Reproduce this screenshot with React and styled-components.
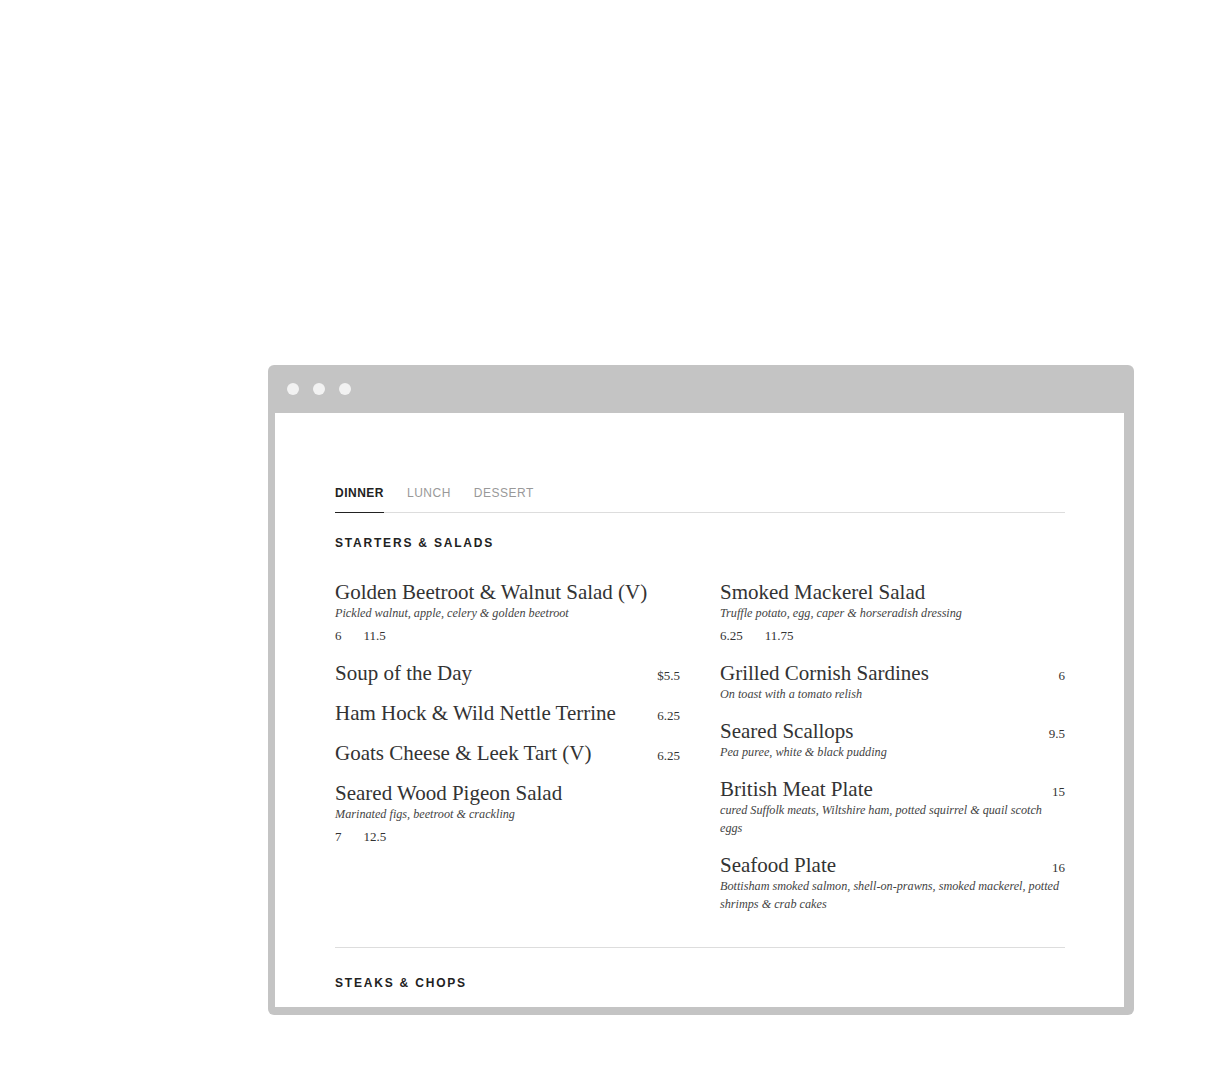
import React from 'react';
import styled, { createGlobalStyle } from 'styled-components';

const GlobalStyle = createGlobalStyle`
  html, body {
    margin: 0;
    padding: 0;
    background: #ffffff;
  }
  body {
    font-family: "Liberation Serif", "Times New Roman", serif;
    color: #333333;
  }
`;

const sans = `"Liberation Sans", Arial, sans-serif`;

const Page = styled.div`
  padding: 365px 0 0 268px;
  height: 1066px;
  box-sizing: border-box;
`;

const Frame = styled.div`
  width: 866px;
  background: #c4c4c4;
  border-radius: 6px;
  padding: 0 10px 8px 7px;
  box-sizing: border-box;
`;

const TitleBar = styled.div`
  height: 48px;
  display: flex;
  align-items: center;
  gap: 14px;
  padding-left: 12px;
`;

const Dot = styled.span`
  width: 12px;
  height: 12px;
  border-radius: 50%;
  background: #f2f2f2;
`;

const Screen = styled.div`
  background: #ffffff;
  height: 594px;
  overflow: hidden;
  padding: 71px 59px 0 60px;
  box-sizing: border-box;
`;

const Tabs = styled.div`
  display: flex;
  gap: 23px;
  border-bottom: 1px solid #dddddd;
`;

const Tab = styled.div`
  font-family: ${sans};
  font-size: 12px;
  line-height: 18px;
  letter-spacing: 0.5px;
  padding-bottom: 10px;
  margin-bottom: -1px;
  color: ${(p) => (p.$active ? '#222222' : '#999999')};
  font-weight: ${(p) => (p.$active ? 700 : 400)};
  border-bottom: 1px solid ${(p) => (p.$active ? '#222222' : 'transparent')};
`;

const SectionTitle = styled.h2`
  margin: ${(p) => p.$top || 20}px 0 0;
  font-family: ${sans};
  font-size: 12px;
  line-height: 20px;
  letter-spacing: 1.8px;
  font-weight: 700;
  color: #222222;
`;

const Grid = styled.div`
  display: grid;
  grid-template-columns: 1fr 1fr;
  column-gap: 40px;
  margin-top: 27px;
`;

const Column = styled.div`
  display: flex;
  flex-direction: column;
`;

const Item = styled.div`
  margin-bottom: ${(p) => (p.$tight ? 15 : 16)}px;
`;

const ItemHead = styled.div`
  display: flex;
  justify-content: space-between;
  align-items: baseline;
`;

const ItemName = styled.div`
  font-size: 21px;
  line-height: 24px;
  color: #333333;
`;

const Price = styled.span`
  font-size: 13px;
  color: #333333;
`;

const Desc = styled.div`
  font-style: italic;
  font-size: 12.2px;
  line-height: 18px;
  color: #444444;
`;

const Prices = styled.div`
  display: flex;
  gap: 22px;
  margin-top: 4px;
  font-size: 13px;
  line-height: 20px;
`;

const Divider = styled.hr`
  border: 0;
  border-top: 1px solid #dddddd;
  margin: 18px 0 0;
`;

const left = [
  { name: 'Golden Beetroot & Walnut Salad (V)', desc: 'Pickled walnut, apple, celery & golden beetroot', prices: ['6', '11.5'] },
  { name: 'Soup of the Day', price: '$5.5' },
  { name: 'Ham Hock & Wild Nettle Terrine', price: '6.25' },
  { name: 'Goats Cheese & Leek Tart (V)', price: '6.25' },
  { name: 'Seared Wood Pigeon Salad', desc: 'Marinated figs, beetroot & crackling', prices: ['7', '12.5'] },
];

const right = [
  { name: 'Smoked Mackerel Salad', desc: 'Truffle potato, egg, caper & horseradish dressing', prices: ['6.25', '11.75'] },
  { name: 'Grilled Cornish Sardines', desc: 'On toast with a tomato relish', price: '6' },
  { name: 'Seared Scallops', desc: 'Pea puree, white & black pudding', price: '9.5' },
  { name: 'British Meat Plate', desc: 'cured Suffolk meats, Wiltshire ham, potted squirrel & quail scotch eggs', price: '15' },
  { name: 'Seafood Plate', desc: 'Bottisham smoked salmon, shell-on-prawns, smoked mackerel, potted shrimps & crab cakes', price: '16' },
];

function MenuItem({ item }) {
  return (
    <Item $tight={!!item.prices}>
      <ItemHead>
        <ItemName>{item.name}</ItemName>
        {item.price && <Price>{item.price}</Price>}
      </ItemHead>
      {item.desc && <Desc>{item.desc}</Desc>}
      {item.prices && (
        <Prices>
          {item.prices.map((p) => (
            <span key={p}>{p}</span>
          ))}
        </Prices>
      )}
    </Item>
  );
}

export default function App() {
  return (
    <>
      <GlobalStyle />
      <Page>
        <Frame>
          <TitleBar>
            <Dot />
            <Dot />
            <Dot />
          </TitleBar>
          <Screen>
            <Tabs>
              <Tab $active>DINNER</Tab>
              <Tab>LUNCH</Tab>
              <Tab>DESSERT</Tab>
            </Tabs>
            <SectionTitle>STARTERS &amp; SALADS</SectionTitle>
            <Grid>
              <Column>
                {left.map((it) => (
                  <MenuItem key={it.name} item={it} />
                ))}
              </Column>
              <Column>
                {right.map((it) => (
                  <MenuItem key={it.name} item={it} />
                ))}
              </Column>
            </Grid>
            <Divider />
            <SectionTitle $top={25}>STEAKS &amp; CHOPS</SectionTitle>
          </Screen>
        </Frame>
      </Page>
    </>
  );
}
